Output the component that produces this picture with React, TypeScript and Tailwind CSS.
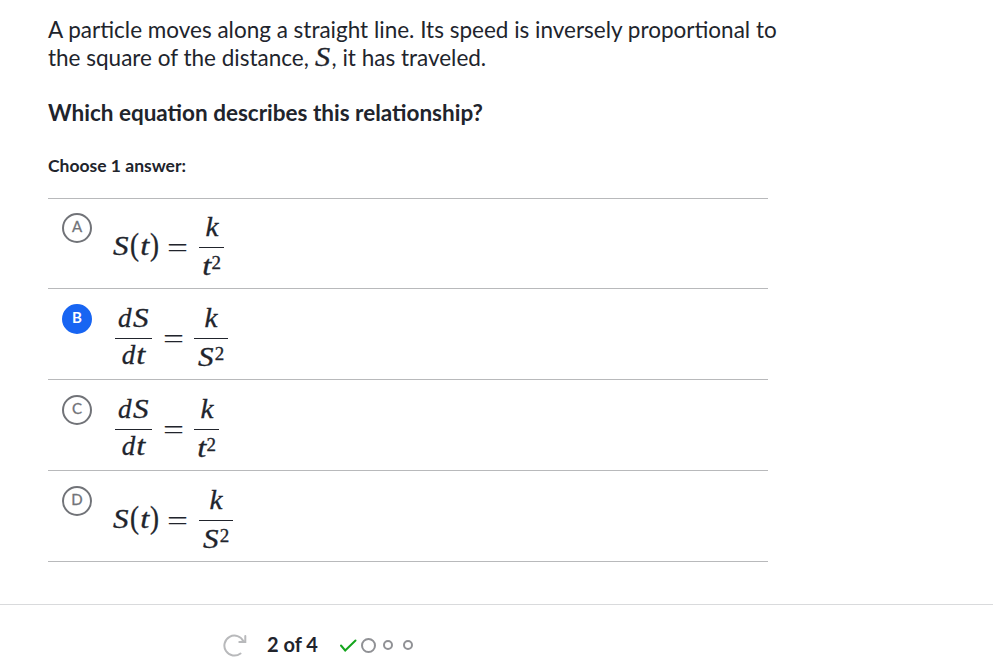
import React from "react";

type GlyphName = "S" | "t" | "k" | "d" | "(" | ")" | "=";

const glyphs: Record<GlyphName, { box: string; ink: string }> = {
  S: { box: "w-[17.5px]", ink: "italic scale-x-[1.15] scale-y-[1.05]" },
  t: { box: "w-[10px]", ink: "italic scale-x-[1.2] scale-y-[1.05]" },
  k: { box: "w-[14px]", ink: "italic scale-x-[1.08] scale-y-[1.05]" },
  d: { box: "w-[14px]", ink: "italic scale-y-[1.05]" },
  "(": { box: "w-[10px]", ink: "-translate-y-px scale-y-[1.15]" },
  ")": { box: "w-[10px]", ink: "-translate-y-px scale-y-[1.15]" },
  "=": { box: "w-[20px]", ink: "scale-x-[1.38] [-webkit-text-stroke:0px]" },
};

function Glyph({ c }: { c: GlyphName }) {
  const g = glyphs[c];
  return (
    <span className={`inline-flex justify-center ${g.box}`}>
      <span className={`inline-block ${g.ink}`}>{c}</span>
    </span>
  );
}

function Squared({ c }: { c: GlyphName }) {
  return (
    <span className="inline-flex pt-[2px]">
      <Glyph c={c} />
      <span className="-mt-[3px] inline-block w-[10px] text-[19px]">2</span>
    </span>
  );
}

function Fraction({ top, bottom, width }: { top: React.ReactNode; bottom: React.ReactNode; width: string }) {
  return (
    <span className={`flex flex-col items-center ${width}`}>
      <span className="flex h-[37px] items-start pt-[2px] leading-[30px]">{top}</span>
      <span className="h-px w-full bg-[#21242c]" />
      <span className="flex h-[37px] items-start pt-px leading-[30px]">{bottom}</span>
    </span>
  );
}

function Row({ letter, selected, kind, denominator }: {
  letter: string;
  selected?: boolean;
  kind: "function" | "derivative";
  denominator: "S" | "t";
}) {
  return (
    <li className="flex h-[91px] border-b border-[#b8b9bb] pt-[15px] pl-[14px] first:h-[90px] first:pt-[14px]">
      <span
        className={`flex size-[30px] shrink-0 items-center justify-center rounded-full border-2 pb-[3px] text-[15px] leading-none font-bold ${
          selected ? "border-[#1865f2] bg-[#1865f2] text-white" : "border-[#717378] text-[#717378]"
        }`}
      >
        <span className={selected ? "" : "font-normal [-webkit-text-stroke:0.3px_#717378]"}>{letter}</span>
      </span>
      <span className="flex h-[75px] -translate-y-[3px] items-center font-['Liberation_Serif',serif] text-[27px] leading-[30px] text-[#21242c] [-webkit-text-stroke:0.3px_#21242c]">
        {kind === "function" ? (
          <span className="ml-5 flex w-[49px] -translate-y-[2px]">
            <Glyph c="S" />
            <Glyph c="(" />
            <Glyph c="t" />
            <Glyph c=")" />
          </span>
        ) : (
          <span className="ml-[23px]">
            <Fraction width="w-[37px]" top={<><Glyph c="d" /><Glyph c="S" /></>} bottom={<><Glyph c="d" /><Glyph c="t" /></>} />
          </span>
        )}
        <span className={kind === "function" ? "mr-[11px] ml-[7px]" : "mr-[10px] ml-[12px]"}>
          <Glyph c="=" />
        </span>
        <Fraction width={denominator === "S" ? "w-[34px]" : "w-[25px]"} top={<Glyph c="k" />} bottom={<Squared c={denominator} />} />
      </span>
    </li>
  );
}

export default function App() {
  return (
    <div className="flex h-[657px] w-full flex-col overflow-hidden bg-white font-['Lato',sans-serif] text-[#21242c]">
      <main className="h-[604px] shrink-0 pt-4 pl-12">
        <p className="w-[760px] text-[22.5px] leading-7 whitespace-nowrap">
          A particle moves along a straight line. Its speed is inversely proportional to
          <br />
          the square of the distance,{" "}
          <span className="inline-block w-[17px] font-['Liberation_Serif',serif] text-[27px] leading-none italic [-webkit-text-stroke:0.3px_#21242c]">
            <span className="inline-block origin-bottom-left scale-x-[1.12]">S</span>
          </span>
          , it has traveled.
        </p>
        <p className="mt-[27px] text-[22.5px] leading-7 font-bold">Which equation describes this relationship?</p>
        <p className="mt-[29px] text-[17.5px] leading-5 font-bold">Choose 1 answer:</p>
        <ul className="mt-[22px] w-[720px] border-t border-[#b8b9bb]">
          <Row letter="A" kind="function" denominator="t" />
          <Row letter="B" selected kind="derivative" denominator="S" />
          <Row letter="C" kind="derivative" denominator="t" />
          <Row letter="D" kind="function" denominator="S" />
        </ul>
      </main>
      <footer className="flex h-[53px] items-start border-t border-[#d9dadc] pl-[221px]">
        <svg className="mt-7 h-6 w-[26px]" viewBox="0 0 26 24" fill="none" stroke="#b8b9bb" strokeWidth="2" strokeLinecap="round">
          <path d="M19.5 20.5A10 10 0 1 1 22.5 8.5M24.3 3v6h-6" />
        </svg>
        <span className="mt-[27px] ml-5 w-[52px] text-[20px] leading-6 font-bold whitespace-nowrap">2 of 4</span>
        <svg className="mt-[34px] ml-5 h-4 w-[76px] overflow-visible" viewBox="0 0 76 16" fill="none" stroke="#909195" strokeWidth="2">
          <path d="M2 6.5l4.2 5L16.5 1.5" stroke="#14a51d" strokeLinecap="round" />
          <circle cx="29.5" cy="6.5" r="6.5" />
          <circle cx="49" cy="6" r="4" />
          <circle cx="69" cy="6" r="4" />
        </svg>
      </footer>
    </div>
  );
}
